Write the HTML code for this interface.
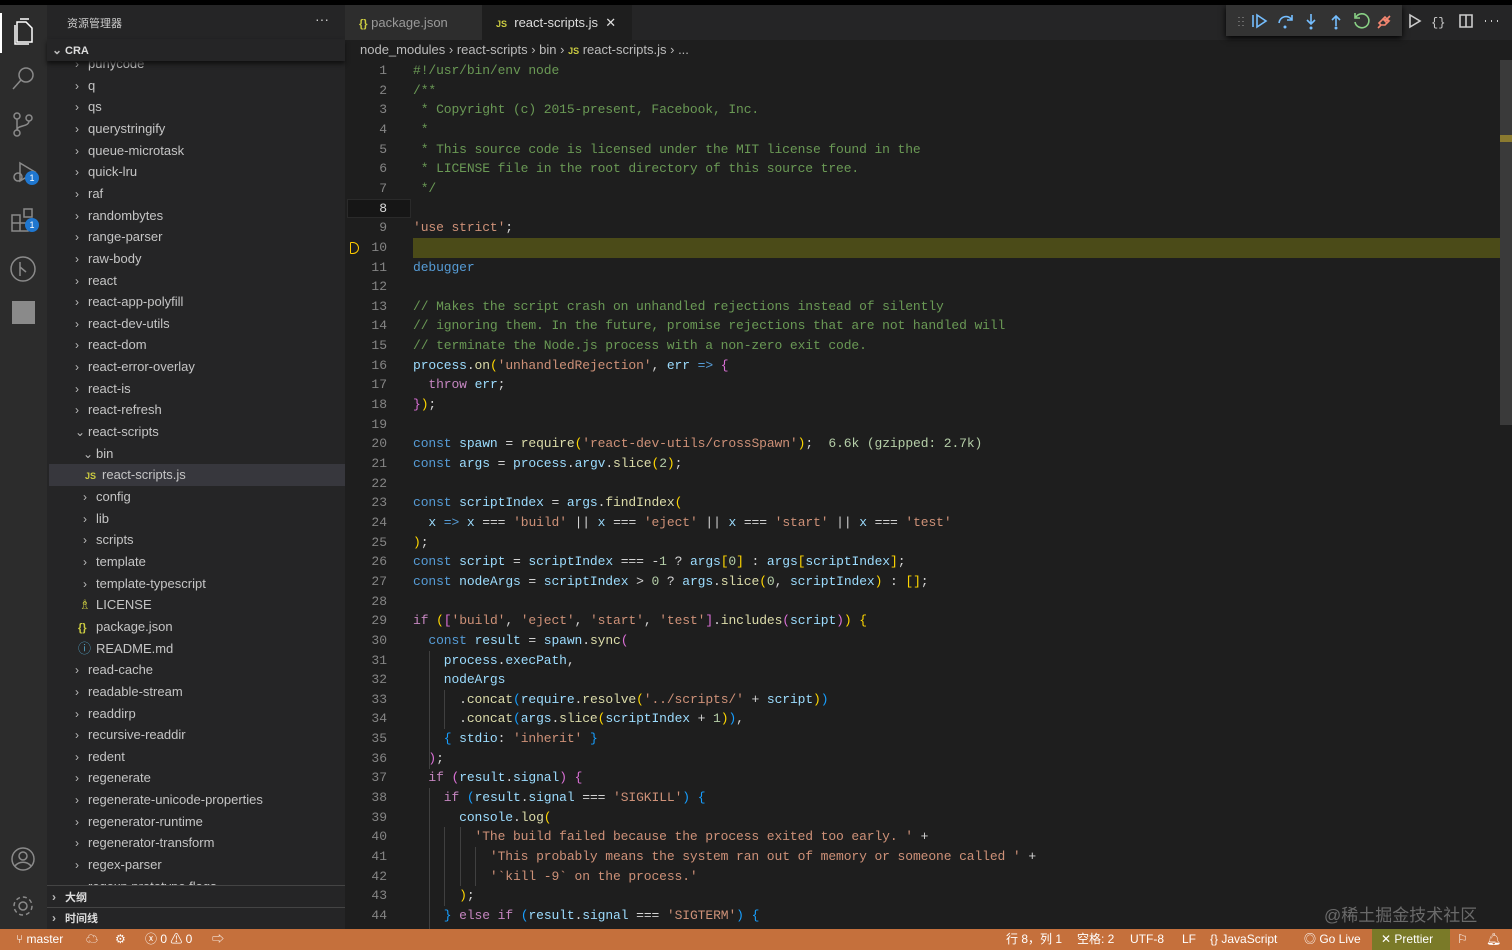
<!DOCTYPE html>
<html><head><meta charset="utf-8"><style>
*{margin:0;padding:0;box-sizing:border-box}
body{width:1512px;height:950px;background:#1e1e1e;overflow:hidden;position:relative;font-family:"Liberation Sans","Noto Sans CJK SC",sans-serif;color:#ccc}
.abs{position:absolute}
#top{left:0;top:0;width:1512px;height:5px;background:#000}
#act{left:0;top:5px;width:47px;height:924px;background:#2c2c2c}
#side{left:47px;top:5px;width:298px;height:924px;background:#252526}
#tabs{left:345px;top:5px;width:1167px;height:35px;background:#252526}
.tab{position:absolute;top:0;height:35px;font-size:13px;line-height:35px;color:#9a9a9a;padding-left:14px}
.row{position:absolute;left:0;height:21.65px;line-height:21.65px;font-size:13px;color:#c5c5c5;white-space:nowrap;width:298px}
.chev{display:inline-block;width:13px;color:#bbb;font-size:12px}
#code{left:345px;top:61px;width:1155px;height:868px;overflow:hidden}
.ln{position:absolute;left:0;width:42px;text-align:right;font-family:"Liberation Mono",monospace;font-size:13px;color:#858585;height:19.65px;line-height:19.65px}
.cl{position:absolute;left:68px;font-family:"Liberation Mono",monospace;font-size:13px;letter-spacing:-0.11px;color:#d4d4d4;white-space:pre;height:19.65px;line-height:19.65px}
.k{color:#569cd6}.v{color:#9cdcfe}.f{color:#dcdcaa}.s{color:#ce9178}.c{color:#6a9955}.p{color:#c586c0}.n{color:#b5cea8}.y{color:#ffd700}.m{color:#da70d6}.b{color:#179fff}
#status{left:0;top:929px;width:1512px;height:21px;background:#c5703c;font-size:12px;color:#fff;line-height:21px}
.si{position:absolute;top:0}
.g{position:absolute;width:1px;background:#404040}
</style></head><body>
<div class="abs" id="top"></div>
<div class="abs" id="act">
<div class="abs" style="left:0;top:8px;width:2px;height:40px;background:#fff"></div>
<svg class="abs" style="left:0;top:0" width="47" height="330" fill="none" stroke="#c8c8c8" stroke-width="1.5">
<path d="M17 17h9l6 6v14h-15z M20 14h9M15 20v19h14" stroke="#fff"/>
<circle cx="26" cy="70" r="7" stroke="#8a8a8a"/><path d="M21 75l-8 9" stroke="#8a8a8a"/>
<circle cx="17" cy="111" r="3" stroke="#8a8a8a"/><circle cx="29" cy="113" r="3" stroke="#8a8a8a"/><circle cx="17" cy="128" r="3" stroke="#8a8a8a"/><path d="M17 114v11M29 116c0 6-12 4-12 9" stroke="#8a8a8a"/>
<path d="M20 158l15 9-15 9z" stroke="#8a8a8a"/><circle cx="18" cy="172" r="4" stroke="#8a8a8a"/>
<path d="M12 210h8v8h-8zM12 218h8v8h-8zM20 218h8v8h-8zM24 204h8v8h-8z" stroke="#8a8a8a"/>
<circle cx="23" cy="264" r="12" stroke="#8a8a8a"/><path d="M20 257v14M20 262l6 5" stroke="#8a8a8a"/>
</svg>
<div class="abs" style="left:25px;top:166px;width:14px;height:14px;border-radius:7px;background:#1f77d0;color:#fff;font-size:9px;text-align:center;line-height:14px">1</div>
<div class="abs" style="left:25px;top:213px;width:14px;height:14px;border-radius:7px;background:#1f77d0;color:#fff;font-size:9px;text-align:center;line-height:14px">1</div>
<div class="abs" style="left:12px;top:296px;width:23px;height:23px;background:#8a8a8a"></div>
<svg class="abs" style="left:0;top:840px" width="47" height="80" fill="none" stroke="#8a8a8a" stroke-width="1.5">
<circle cx="23" cy="14" r="11"/><circle cx="23" cy="11" r="4"/><path d="M15 21c4-5 12-5 16 0"/>
<circle cx="23" cy="61" r="4"/><circle cx="23" cy="61" r="9" stroke-dasharray="4 3"/>
</svg>
</div>
<div class="abs" id="side">
<div class="abs" style="left:20px;top:10px;font-size:11px;color:#ccc">资源管理器</div>
<div class="abs" style="left:268px;top:6px;font-size:14px;color:#ccc">···</div>
<div class="abs" style="left:2px;top:49px;width:296px;height:831px;overflow:hidden">
<div class="row" style="top:-1px;padding-left:26px"><span class="chev">›</span>punycode</div>
<div class="row" style="top:20.6px;padding-left:26px"><span class="chev">›</span>q</div>
<div class="row" style="top:42.3px;padding-left:26px"><span class="chev">›</span>qs</div>
<div class="row" style="top:63.9px;padding-left:26px"><span class="chev">›</span>querystringify</div>
<div class="row" style="top:85.6px;padding-left:26px"><span class="chev">›</span>queue-microtask</div>
<div class="row" style="top:107.2px;padding-left:26px"><span class="chev">›</span>quick-lru</div>
<div class="row" style="top:128.9px;padding-left:26px"><span class="chev">›</span>raf</div>
<div class="row" style="top:150.5px;padding-left:26px"><span class="chev">›</span>randombytes</div>
<div class="row" style="top:172.2px;padding-left:26px"><span class="chev">›</span>range-parser</div>
<div class="row" style="top:193.8px;padding-left:26px"><span class="chev">›</span>raw-body</div>
<div class="row" style="top:215.5px;padding-left:26px"><span class="chev">›</span>react</div>
<div class="row" style="top:237.1px;padding-left:26px"><span class="chev">›</span>react-app-polyfill</div>
<div class="row" style="top:258.8px;padding-left:26px"><span class="chev">›</span>react-dev-utils</div>
<div class="row" style="top:280.4px;padding-left:26px"><span class="chev">›</span>react-dom</div>
<div class="row" style="top:302.1px;padding-left:26px"><span class="chev">›</span>react-error-overlay</div>
<div class="row" style="top:323.7px;padding-left:26px"><span class="chev">›</span>react-is</div>
<div class="row" style="top:345.4px;padding-left:26px"><span class="chev">›</span>react-refresh</div>
<div class="row" style="top:367px;padding-left:26px"><span class="chev">⌄</span>react-scripts</div>
<div class="row" style="top:388.7px;padding-left:34px"><span class="chev">⌄</span>bin</div>
<div class="row" style="top:410.3px;padding-left:38px;background:#37373d;left:-2px;width:298px"><span style="font-size:9px;font-weight:bold;color:#cbcb41;margin-right:6px">JS</span>react-scripts.js</div>
<div class="row" style="top:432px;padding-left:34px"><span class="chev">›</span>config</div>
<div class="row" style="top:453.6px;padding-left:34px"><span class="chev">›</span>lib</div>
<div class="row" style="top:475.3px;padding-left:34px"><span class="chev">›</span>scripts</div>
<div class="row" style="top:496.9px;padding-left:34px"><span class="chev">›</span>template</div>
<div class="row" style="top:518.6px;padding-left:34px"><span class="chev">›</span>template-typescript</div>
<div class="row" style="top:540.2px;padding-left:30px"><span style="color:#cbcb41;display:inline-block;width:17px">♗</span>LICENSE</div>
<div class="row" style="top:561.9px;padding-left:29px"><span style="color:#cbcb41;display:inline-block;width:18px;font-size:11px;font-weight:bold">{}</span>package.json</div>
<div class="row" style="top:583.5px;padding-left:29px"><span style="color:#519aba;display:inline-block;width:18px">ⓘ</span>README.md</div>
<div class="row" style="top:605.2px;padding-left:26px"><span class="chev">›</span>read-cache</div>
<div class="row" style="top:626.8px;padding-left:26px"><span class="chev">›</span>readable-stream</div>
<div class="row" style="top:648.5px;padding-left:26px"><span class="chev">›</span>readdirp</div>
<div class="row" style="top:670.1px;padding-left:26px"><span class="chev">›</span>recursive-readdir</div>
<div class="row" style="top:691.8px;padding-left:26px"><span class="chev">›</span>redent</div>
<div class="row" style="top:713.4px;padding-left:26px"><span class="chev">›</span>regenerate</div>
<div class="row" style="top:735.1px;padding-left:26px"><span class="chev">›</span>regenerate-unicode-properties</div>
<div class="row" style="top:756.7px;padding-left:26px"><span class="chev">›</span>regenerator-runtime</div>
<div class="row" style="top:778.4px;padding-left:26px"><span class="chev">›</span>regenerator-transform</div>
<div class="row" style="top:800px;padding-left:26px"><span class="chev">›</span>regex-parser</div>
<div class="row" style="top:821.7px;padding-left:26px"><span class="chev">›</span>regexp.prototype.flags</div>
</div>
<div class="abs" style="left:0;top:34px;width:298px;height:22px;background:#252526;box-shadow:0 3px 4px #111;font-size:11px;font-weight:bold;line-height:22px;padding-left:5px;color:#ddd"><span class="chev">⌄</span>CRA</div>
<div class="abs" style="left:0;top:880px;width:298px;height:1px;background:#444"></div>
<div class="abs" style="left:5px;top:882px;font-size:11px;font-weight:bold;line-height:20px;color:#ddd"><span class="chev">›</span>大纲</div>
<div class="abs" style="left:0;top:902px;width:298px;height:1px;background:#444"></div>
<div class="abs" style="left:5px;top:903px;font-size:11px;font-weight:bold;line-height:20px;color:#ddd"><span class="chev">›</span>时间线</div>
</div>
<div class="abs" id="tabs">
<div class="tab" style="left:0;width:137px;background:#2d2d2d"><span style="color:#cbcb41;font-size:11px;font-weight:bold">{}</span> package.json</div>
<div class="tab" style="left:137px;width:150px;background:#1e1e1e;color:#ddd"><span style="color:#cbcb41;font-size:9px;font-weight:bold">JS</span>&nbsp; react-scripts.js &nbsp;✕</div>
<div class="abs" style="left:881px;top:0;width:176px;height:31px;background:#333;box-shadow:0 2px 6px #000"></div>
<svg class="abs" style="left:880px;top:0" width="287" height="35" fill="none" stroke-width="1.6">
<path d="M14 12v1M18 12v1M14 16v1M18 16v1M14 20v1M18 20v1" stroke="#777"/>
<path d="M28 10v12M32 10l9 6-9 6z" stroke="#75beff"/>
<path d="M54 18a7 7 0 0 1 13-3M67 10v5h-5" stroke="#75beff"/><circle cx="60" cy="22" r="1.5" fill="#75beff" stroke="none"/>
<path d="M86 9v10M82 15l4 4 4-4" stroke="#75beff"/><circle cx="86" cy="23" r="1.5" fill="#75beff" stroke="none"/>
<path d="M111 21V11M107 15l4-4 4 4" stroke="#75beff"/><circle cx="111" cy="23" r="1.5" fill="#75beff" stroke="none"/>
<path d="M131 12a7 7 0 1 1-1 5M130 8v5h5" stroke="#89d185"/>
<path d="M153 23l3-3M165 11l-3 3M156 20l-2-2 4-4 6 2-4 4zM158 14l2-2 4 4-2 2z" stroke="#f48771"/>
<path d="M185 10l10 6-10 6z" stroke="#ccc"/>
<text x="206" y="21" fill="#ccc" stroke="none" font-size="12" font-family="Liberation Mono">{}</text>
<path d="M235 10h12v12h-12zM241 10v12" stroke="#ccc"/>
<path d="M260 16h1M266 16h1M272 16h1" stroke="#ccc" stroke-width="2"/>
</svg>
</div>
<div class="abs" style="left:360px;top:40px;height:20px;line-height:20px;font-size:13px;color:#bbb">node_modules › react-scripts › bin › <span style="color:#cbcb41;font-size:9px;font-weight:bold">JS</span> react-scripts.js › ...</div>
<div class="abs" id="code">
<div class="abs" style="left:2px;top:137.5px;width:64px;height:19.65px;border:1px solid #2a2a2a;background:#161616"></div>
<div class="abs" style="left:68px;top:177px;width:1090px;height:19.65px;background:#4b4b18"></div>
<div class="abs" style="left:5px;top:181px;width:9px;height:12px;border:1.5px solid #ffcc00;border-radius:1px 6px 6px 1px"></div>
<div class="ln" style="top:0">1</div><div class="cl" style="top:0"><span class="c">#!/usr/bin/env node</span></div>
<div class="ln" style="top:19.65px">2</div><div class="cl" style="top:19.65px"><span class="c">/**</span></div>
<div class="ln" style="top:39.3px">3</div><div class="cl" style="top:39.3px"><span class="c"> * Copyright (c) 2015-present, Facebook, Inc.</span></div>
<div class="ln" style="top:58.95px">4</div><div class="cl" style="top:58.95px"><span class="c"> *</span></div>
<div class="ln" style="top:78.6px">5</div><div class="cl" style="top:78.6px"><span class="c"> * This source code is licensed under the MIT license found in the</span></div>
<div class="ln" style="top:98.25px">6</div><div class="cl" style="top:98.25px"><span class="c"> * LICENSE file in the root directory of this source tree.</span></div>
<div class="ln" style="top:117.9px">7</div><div class="cl" style="top:117.9px"><span class="c"> */</span></div>
<div class="ln" style="top:137.55px;color:#ddd">8</div>
<div class="ln" style="top:157.2px">9</div><div class="cl" style="top:157.2px"><span class="s">'use strict'</span>;</div>
<div class="ln" style="top:176.85px">10</div>
<div class="ln" style="top:196.5px">11</div><div class="cl" style="top:196.5px"><span class="k">debugger</span></div>
<div class="ln" style="top:216.15px">12</div>
<div class="ln" style="top:235.8px">13</div><div class="cl" style="top:235.8px"><span class="c">// Makes the script crash on unhandled rejections instead of silently</span></div>
<div class="ln" style="top:255.45px">14</div><div class="cl" style="top:255.45px"><span class="c">// ignoring them. In the future, promise rejections that are not handled will</span></div>
<div class="ln" style="top:275.1px">15</div><div class="cl" style="top:275.1px"><span class="c">// terminate the Node.js process with a non-zero exit code.</span></div>
<div class="ln" style="top:294.75px">16</div><div class="cl" style="top:294.75px"><span class="v">process</span>.<span class="f">on</span><span class="y">(</span><span class="s">'unhandledRejection'</span>, <span class="v">err</span> <span class="k">=&gt;</span> <span class="m">{</span></div>
<div class="ln" style="top:314.4px">17</div><div class="cl" style="top:314.4px">  <span class="p">throw</span> <span class="v">err</span>;</div>
<div class="ln" style="top:334.05px">18</div><div class="cl" style="top:334.05px"><span class="m">}</span><span class="y">)</span>;</div>
<div class="ln" style="top:353.7px">19</div>
<div class="ln" style="top:373.35px">20</div><div class="cl" style="top:373.35px"><span class="k">const</span> <span class="v">spawn</span> = <span class="f">require</span><span class="y">(</span><span class="s">'react-dev-utils/crossSpawn'</span><span class="y">)</span>;  <span class="n">6.6k (gzipped: 2.7k)</span></div>
<div class="ln" style="top:393px">21</div><div class="cl" style="top:393px"><span class="k">const</span> <span class="v">args</span> = <span class="v">process</span>.<span class="v">argv</span>.<span class="f">slice</span><span class="y">(</span><span class="n">2</span><span class="y">)</span>;</div>
<div class="ln" style="top:412.65px">22</div>
<div class="ln" style="top:432.3px">23</div><div class="cl" style="top:432.3px"><span class="k">const</span> <span class="v">scriptIndex</span> = <span class="v">args</span>.<span class="f">findIndex</span><span class="y">(</span></div>
<div class="ln" style="top:451.95px">24</div><div class="cl" style="top:451.95px">  <span class="v">x</span> <span class="k">=&gt;</span> <span class="v">x</span> === <span class="s">'build'</span> || <span class="v">x</span> === <span class="s">'eject'</span> || <span class="v">x</span> === <span class="s">'start'</span> || <span class="v">x</span> === <span class="s">'test'</span></div>
<div class="ln" style="top:471.6px">25</div><div class="cl" style="top:471.6px"><span class="y">)</span>;</div>
<div class="ln" style="top:491.25px">26</div><div class="cl" style="top:491.25px"><span class="k">const</span> <span class="v">script</span> = <span class="v">scriptIndex</span> === -<span class="n">1</span> ? <span class="v">args</span><span class="y">[</span><span class="n">0</span><span class="y">]</span> : <span class="v">args</span><span class="y">[</span><span class="v">scriptIndex</span><span class="y">]</span>;</div>
<div class="ln" style="top:510.9px">27</div><div class="cl" style="top:510.9px"><span class="k">const</span> <span class="v">nodeArgs</span> = <span class="v">scriptIndex</span> &gt; <span class="n">0</span> ? <span class="v">args</span>.<span class="f">slice</span><span class="y">(</span><span class="n">0</span>, <span class="v">scriptIndex</span><span class="y">)</span> : <span class="y">[]</span>;</div>
<div class="ln" style="top:530.55px">28</div>
<div class="ln" style="top:550.2px">29</div><div class="cl" style="top:550.2px"><span class="p">if</span> <span class="y">(</span><span class="m">[</span><span class="s">'build'</span>, <span class="s">'eject'</span>, <span class="s">'start'</span>, <span class="s">'test'</span><span class="m">]</span>.<span class="f">includes</span><span class="m">(</span><span class="v">script</span><span class="m">)</span><span class="y">)</span> <span class="y">{</span></div>
<div class="ln" style="top:569.85px">30</div><div class="cl" style="top:569.85px">  <span class="k">const</span> <span class="v">result</span> = <span class="v">spawn</span>.<span class="f">sync</span><span class="m">(</span></div>
<div class="ln" style="top:589.5px">31</div><div class="cl" style="top:589.5px">    <span class="v">process</span>.<span class="v">execPath</span>,</div>
<div class="ln" style="top:609.15px">32</div><div class="cl" style="top:609.15px">    <span class="v">nodeArgs</span></div>
<div class="ln" style="top:628.8px">33</div><div class="cl" style="top:628.8px">      .<span class="f">concat</span><span class="b">(</span><span class="v">require</span>.<span class="f">resolve</span><span class="y">(</span><span class="s">'../scripts/'</span> + <span class="v">script</span><span class="y">)</span><span class="b">)</span></div>
<div class="ln" style="top:648.45px">34</div><div class="cl" style="top:648.45px">      .<span class="f">concat</span><span class="b">(</span><span class="v">args</span>.<span class="f">slice</span><span class="y">(</span><span class="v">scriptIndex</span> + <span class="n">1</span><span class="y">)</span><span class="b">)</span>,</div>
<div class="ln" style="top:668.1px">35</div><div class="cl" style="top:668.1px">    <span class="b">{</span> <span class="v">stdio</span>: <span class="s">'inherit'</span> <span class="b">}</span></div>
<div class="ln" style="top:687.75px">36</div><div class="cl" style="top:687.75px">  <span class="m">)</span>;</div>
<div class="ln" style="top:707.4px">37</div><div class="cl" style="top:707.4px">  <span class="p">if</span> <span class="m">(</span><span class="v">result</span>.<span class="v">signal</span><span class="m">)</span> <span class="m">{</span></div>
<div class="ln" style="top:727.05px">38</div><div class="cl" style="top:727.05px">    <span class="p">if</span> <span class="b">(</span><span class="v">result</span>.<span class="v">signal</span> === <span class="s">'SIGKILL'</span><span class="b">)</span> <span class="b">{</span></div>
<div class="ln" style="top:746.7px">39</div><div class="cl" style="top:746.7px">      <span class="v">console</span>.<span class="f">log</span><span class="y">(</span></div>
<div class="ln" style="top:766.35px">40</div><div class="cl" style="top:766.35px">        <span class="s">'The build failed because the process exited too early. '</span> +</div>
<div class="ln" style="top:786px">41</div><div class="cl" style="top:786px">          <span class="s">'This probably means the system ran out of memory or someone called '</span> +</div>
<div class="ln" style="top:805.65px">42</div><div class="cl" style="top:805.65px">          <span class="s">'`kill -9` on the process.'</span></div>
<div class="ln" style="top:825.3px">43</div><div class="cl" style="top:825.3px">      <span class="y">)</span>;</div>
<div class="ln" style="top:844.95px">44</div><div class="cl" style="top:844.95px">    <span class="b">}</span> <span class="p">else</span> <span class="p">if</span> <span class="b">(</span><span class="v">result</span>.<span class="v">signal</span> === <span class="s">'SIGTERM'</span><span class="b">)</span> <span class="b">{</span></div>
<div class="g" style="left:84px;top:589.5px;height:118px"></div>
<div class="g" style="left:84px;top:727px;height:141px"></div>
<div class="g" style="left:99px;top:628.8px;height:39.3px"></div>
<div class="g" style="left:99px;top:766.35px;height:78.6px"></div>
<div class="g" style="left:115px;top:766.35px;height:59px"></div>
<div class="g" style="left:130px;top:786px;height:39.3px"></div>
</div>
<div class="abs" style="left:1500px;top:60px;width:12px;height:365px;background:#3a3a3a"></div>
<div class="abs" style="left:1500px;top:135px;width:12px;height:7px;background:#8a7a30"></div>
<div class="abs" style="left:1324px;top:901px;font-size:17px;color:#6a6a6a">@稀土掘金技术社区</div>
<div class="abs" id="status">
<span class="si" style="left:16px">⑂ master</span>
<span class="si" style="left:86px">☁</span>
<span class="si" style="left:115px">⚙</span>
<span class="si" style="left:145px">ⓧ 0 ⚠ 0</span>
<span class="si" style="left:212px">⇨</span>
<span class="si" style="left:1006px">行 8，列 1</span>
<span class="si" style="left:1077px">空格: 2</span>
<span class="si" style="left:1130px">UTF-8</span>
<span class="si" style="left:1182px">LF</span>
<span class="si" style="left:1210px">{} JavaScript</span>
<span class="si" style="left:1304px">◎ Go Live</span>
<span class="si" style="left:1372px;width:78px;height:21px;background:#7a7a28;padding-left:9px">✕ Prettier</span>
<span class="si" style="left:1457px">⚐</span>
<span class="si" style="left:1486px">🔔︎</span>
</div>
</body></html>
